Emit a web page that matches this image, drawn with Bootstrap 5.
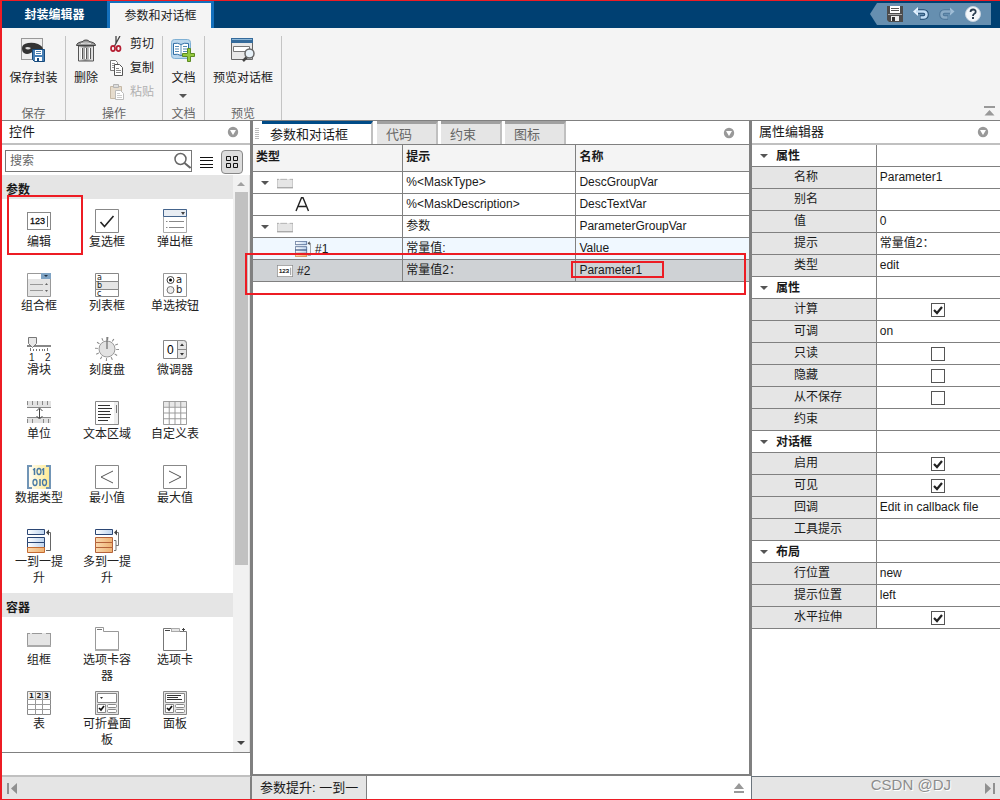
<!DOCTYPE html>
<html lang="zh-CN">
<head>
<meta charset="utf-8">
<meta name="viewport" content="width=device-width, initial-scale=1">
<title>封装编辑器</title>
<link href="https://cdn.jsdelivr.net/npm/bootstrap@5.3.0/dist/css/bootstrap.min.css" rel="stylesheet">
<script src="https://cdn.jsdelivr.net/npm/bootstrap@5.3.0/dist/js/bootstrap.bundle.min.js"></script>
<style>
:root{--line:#808080;--soft:#c0c0c0;--bar:#e5e5e5;--ribbon:#f4f4f4;--mark:#ed1c24}
body{font-family:"Liberation Sans","Noto Sans CJK SC",sans-serif;font-size:12px;line-height:16px;color:#1a1a1a;background:#fff}
button{background:none;border:0;padding:0;color:inherit;font:inherit;white-space:nowrap}
svg{display:block;flex:none}
.app{min-height:100vh;border:1px solid var(--mark);border-left-width:2px;border-right:0}
.titlebar{background:#004072;height:27px}
.app-tab{color:#fff;width:105px;font-weight:700}
.app-tab.active{width:107px;background:var(--ribbon);color:#222;border:solid #1470bd;border-width:2px 3px 0;font-weight:400}
.quick{background:#668fb0;width:121px;height:22px;margin:2px 9px 0 0;padding:0 10px 0 17px;clip-path:polygon(0 50%,7px 0,100% 0,100% 100%,7px 100%)}
.ribbon{background:var(--ribbon);height:93px;border-bottom:1px solid var(--line);padding-top:8px}
.group{border-right:1px solid #c4c4c4}
.group-name{color:#666;height:14px}
.big{height:70px;padding-top:2px}
.big>span{margin-top:8px}
.small-list{margin:-4px 0 0 3px}
.small-cmd{height:24px;gap:5px;flex:none}
.small-cmd:disabled{color:#b0b0b0}
.work{display:grid;grid-template-columns:249fr 500fr 249fr}
.work>*{min-width:0}
.pane-head{height:24px;font-size:13px;border-bottom:2px solid var(--soft);padding:0 11px 0 7px}
.left-pane,.left-foot{border-right:1px solid var(--line)}
.search-row{height:30px;padding:5px 7px 0 3px}
.search-box{height:22px;border:1px solid #777}
.search-box input{border:0;outline:0;padding:0 4px;font-size:12px;background:none;min-width:0}
.search-box input::placeholder{color:#666;opacity:1}
.view-on{width:22px;height:24px;border:1px solid #888;border-radius:4px;background:#dcdcdc}
.sect{background:var(--bar);height:24px;padding:6px 0 0 4px;font-weight:700;font-size:12px;margin:0;line-height:18px}
.sect-next{margin-top:6px}
.palette{padding:4px 0 0 3px}
.tool{width:68px;height:64px;padding-top:6px;white-space:normal;color:#222}
.tool span{width:50px;margin-top:1px}
.palette-scroll{border-bottom:1px solid var(--line)}
.vbar{width:17px;background:#f1f1f1;flex:none;border-right:1px solid #ddd}
.vbar .thumb{width:13px;height:373px;background:#c1c1c1}
.left-tail{height:23px;border-bottom:1px solid var(--soft)}
.center-pane{border:solid var(--line);border-width:0 2px 2px}
.center-tabs{height:24px;border-bottom:1px solid var(--line);padding:0 14px 0 2px}
.grip{margin:7px 3px 0 0}
.doc-tab{width:61px;height:23px;font-size:13px;color:#666;background:var(--bar);border-top:3px solid #a0a0a0;border-right:2px solid var(--soft);text-align:left;padding:2px 0 0 9px;margin-right:3px}
.doc-tab.active{width:111px;background:#fff;color:#1a1a1a;border-top-color:#004b87;padding-left:8px;margin-right:4px}
.grid-table{width:100%;border-collapse:separate;border-spacing:0;table-layout:fixed}
.grid-table td,.grid-table th{height:22px;border-bottom:1px solid var(--line);border-right:1px solid var(--line);padding:0 3px 2px;line-height:18px;white-space:nowrap;font-weight:400}
.grid-table td:last-child,.grid-table th:last-child{border-right:0}
.grid-table thead th{height:27px;background:var(--ribbon);font-weight:700}
.grid-table .nest{height:21px;gap:8px;margin-bottom:-2px}
.lv1{padding-left:5px}
.lv2{padding-left:21px}
.lv3{padding-left:39px}
.grid-table .tight{gap:4px}
.alt td{background:#f0f8ff}
.picked td{background:#cfd2d5}
.right-pane{border-left:1px solid var(--line)}
.props tbody th{background:var(--bar);padding-left:42px}
.props .cat th{background:#fff;font-weight:700;padding-left:8px}
.props input{appearance:none;display:block;width:14px;height:14px;border:1px solid #555;background:#fff;margin:2px auto 0}
.props input:checked{background:#fff url("data:image/svg+xml,%3Csvg xmlns='http://www.w3.org/2000/svg' viewBox='0 0 12 12'%3E%3Cpath d='M2 6l3 3 5-6' fill='none' stroke='%23222' stroke-width='2.2'/%3E%3C/svg%3E")}
.foot{height:23px;background:var(--bar)}
.foot-soft{border-top:1px solid var(--soft)}
.foot-mid{border-left:1px solid var(--line);padding-right:6px}
.promote{background:var(--bar);border-right:1px solid var(--line);width:115px;padding-left:8px;font-size:13px;white-space:nowrap}
.callout{position:absolute;border:2px solid var(--mark);pointer-events:none;z-index:2}
.c-tool{left:2px;top:-8px;width:76px;height:60px}
.c-row{left:-8px;right:3px;top:-7px;height:42px}
.c-name{left:-8px;top:0;width:93px;height:17px}
.brand{right:49px;top:-1px;font-size:15px;line-height:18px;color:#8c8c8c;text-shadow:1px 1px 0 #fff}
</style>
</head>
<body>
<svg width="0" height="0" class="position-absolute" aria-hidden="true">
<defs>
<linearGradient id="gy" x2="1"><stop stop-color="#fff"/><stop offset="1" stop-color="#ffe98a"/></linearGradient>
<linearGradient id="gb" x2="1"><stop stop-color="#fff"/><stop offset="1" stop-color="#bcd3ee"/></linearGradient>
<linearGradient id="go" x2="1"><stop stop-color="#fbd9ae"/><stop offset="1" stop-color="#eeb273"/></linearGradient>
<linearGradient id="gm" x2="1"><stop stop-color="#fff"/><stop offset=".45" stop-color="#999"/><stop offset="1" stop-color="#eee"/></linearGradient>
</defs>
<symbol id="menu" viewBox="0 0 12 12"><circle cx="6" cy="6" r="5.200" fill="#999"/><path d="M3 4h6L6 9z" fill="#fff"/></symbol>
<symbol id="down" viewBox="0 0 8 4"><path d="M0 0h8L4 4z" fill="#555"/></symbol>
<symbol id="groupbox" viewBox="0 0 24 24"><path d="M.5 6v13h23V6" fill="#e5e5e5" stroke="#999"/><path d="M1 6h22v12H1z" fill="#e5e5e5"/><path d="M0 6.500h3m2 0h10m4 0h5" stroke="#999"/><path d="M0 19h24" stroke="#aaa" stroke-width="2"/></symbol>
<symbol id="edit" viewBox="0 0 24 24"><rect x=".5" y="3.500" width="23" height="17" fill="#fff" stroke="#888"/><text x="3" y="15" font-size="9" font-family="Liberation Sans" stroke="#1a1a1a" stroke-width=".3">123</text><path d="M20.500 7v11" stroke="#666"/></symbol>
<symbol id="onepromo" viewBox="0 0 24 24"><g stroke="#2b4674" fill="url(#gb)"><path d="M.5.5h17v5H.5zM.5 8.500h17v5H.5zM.5 13.500h17v5H.5z"/></g><path d="M.5 18.500h17v5H.5z" fill="url(#go)" stroke="#c46a30"/><path d="M19 21.500h4.500V3.500H20" fill="none" stroke="#666"/><path d="M19 3.500l3-3v6z" fill="#444"/></symbol>
</svg>
<div class="app d-flex flex-column">
<header class="titlebar d-flex">
  <button class="app-tab">封装编辑器</button>
  <button class="app-tab active">参数和对话框</button>
  <div class="quick ms-auto d-flex align-items-center justify-content-between">
    <button aria-label="保存"><svg width="16" height="16" viewBox="0 0 16 16"><path d="M0 0h16v16H2l-2-2z" fill="#4c4c4c"/><path d="M3 0h10v7H3z" fill="#fff"/><path d="M4 2.500h8M4 4.500h8" stroke="#555"/><path d="M1 8.500h14" stroke="#aaa"/><path d="M4 10h8v5H4z" fill="#eee"/><path d="M5 11h3v4H5z" fill="#333"/></svg></button>
    <button aria-label="撤销"><svg width="16" height="14" viewBox="0 0 16 14"><path d="M4 4.500h6.500q3 .2 3 3t-3 3H7" fill="none" stroke="#234b70" stroke-width="4.500"/><path d="M0 4.500L5 0v9z" fill="#e6f3ff"/><path d="M3 4.500h7.500q3 .2 3 3t-3 3H7.500" fill="none" stroke="#c4def5" stroke-width="2.500"/></svg></button>
    <button aria-label="重做"><svg width="16" height="14" viewBox="0 0 16 14"><path d="M12 4.500H5.500q-3 .2-3 3t3 3H9" fill="none" stroke="#4f7799" stroke-width="4.500"/><path d="M15.500 4.500L11 .5v8z" fill="#9fbdd6"/><path d="M12 4.500H5.500q-3 .2-3 3t3 3h3" fill="none" stroke="#8aabc6" stroke-width="2.500"/></svg></button>
    <button aria-label="帮助"><svg width="16" height="16" viewBox="0 0 16 16"><circle cx="8" cy="8" r="7.500" fill="#f4f7fa" stroke="#c6d3df"/><path d="M5.500 6q0-2.500 2.600-2.500T10.700 6Q10.700 7.200 9 8 8 8.600 8 10" fill="none" stroke="#2c3e50" stroke-width="1.800"/><path d="M7 11h2v2H7z" fill="#2c3e50"/></svg></button>
  </div>
</header>

<section class="ribbon d-flex">
  <div class="group d-flex flex-column align-items-center" style="width:64px">
    <button class="big d-flex flex-column align-items-center"><svg width="24" height="24" viewBox="0 0 24 24"><rect x=".5" y=".5" width="21" height="21" fill="#eee" stroke="#999"/><path d="M1 10Q1 6 7 5q5-1 10 1 5 2 5 6v2q-4-3-8-2-7 6-11 3Q1 14 1 10z" fill="#333"/><path d="M4 10q2-2 6 0-3 3-6 0z" fill="#ddd"/><path d="M11.500 11.500h12v12h-10l-2-2z" fill="#477fb5" stroke="#174a7c"/><path d="M14 12h7v5h-7z" fill="#fff"/><path d="M15 13.500h5m-5 2h5" stroke="#4b7fae"/><path d="M14 19h7v4h-7z" fill="#fff"/><path d="M16 20h2v3h-2z" fill="#174a7c"/></svg><span>保存封装</span></button>
    <div class="group-name">保存</div>
  </div>
  <div class="group d-flex flex-column align-items-center" style="width:97px">
    <div class="d-flex w-100 big pt-0">
      <button class="d-flex flex-column align-items-center big" style="width:40px"><svg width="24" height="24" viewBox="0 0 24 24"><path d="M4.500 8h15v15h-15z" fill="url(#gm)" stroke="#555"/><path d="M8 10v11m4-11v11m4-11v11" stroke="#fff" stroke-width="2"/><path d="M8.500 10v11m4-11v11m4-11v11" stroke="#555"/><path d="M2.500 7.500q0-3 6.500-4 0-1.500 3-1.500t3 1.500q6.500 1 6.500 4z" fill="#999" stroke="#444"/><path d="M7 5.500q5-1 10 0" stroke="#e5e5e5" fill="none"/></svg><span>删除</span></button>
      <div class="small-list d-flex flex-column">
        <button class="small-cmd d-flex align-items-center"><svg width="16" height="16" viewBox="0 0 16 16"><path d="M7 0v8m4-8L5 11" stroke="#444" stroke-width="1.300"/><g fill="none" stroke="#b51e32" stroke-width="1.700"><ellipse cx="4" cy="12.500" rx="2" ry="2.600"/><ellipse cx="9.500" cy="12.500" rx="2" ry="2.600"/></g></svg><span>剪切</span></button>
        <button class="small-cmd d-flex align-items-center"><svg width="16" height="16" viewBox="0 0 16 16"><path d="M1.500.5h5l2 2v8h-7z" fill="#fff" stroke="#777"/><path d="M3 3.500h3m-3 2h4m-4 2h4" stroke="#999"/><path d="M5.500 4.500h5l3 3v8h-8z" fill="#fff" stroke="#555"/><path d="M7 8.500h3m-3 2h5m-5 2h5" stroke="#888"/></svg><span>复制</span></button>
        <button class="small-cmd d-flex align-items-center" disabled><svg width="16" height="16" viewBox="0 0 16 16"><path d="M1.500 2.500h11v12h-11z" fill="#e6dccd" stroke="#c6b9a6"/><path d="M4.500.5h5v3h-5z" fill="#ddd" stroke="#b5b5b5"/><path d="M6.500 6.500h5l3 3v6h-8z" fill="#fff" stroke="#bbb"/><path d="M8 9.500h3m-3 2h5m-5 2h5" stroke="#ccc"/></svg><span>粘贴</span></button>
      </div>
    </div>
    <div class="group-name">操作</div>
  </div>
  <div class="group d-flex flex-column align-items-center" style="width:42px">
    <button class="big d-flex flex-column align-items-center"><svg width="24" height="24" viewBox="0 0 24 24"><rect x=".5" y="1.500" width="19" height="19" rx="3" fill="#b9d6ed" stroke="#7fb0d4"/><path d="M2.500 5.500q4-1 7.500 1 3.500-2 7.500-1v11q-4-1-7.500 1-3.500-2-7.500-1z" fill="#fff" stroke="#2e6da4"/><path d="M10 6.500v11M4 8.500h4m-4 2.500h4m-4 2.500h4m4-5h4m-4 2.500h4m-4 2.500h4" stroke="#548ab5"/><path d="M16.500 10.500h3v5h4v3h-4v5h-3v-5h-5v-3h5z" fill="#94c83d" stroke="#5b8a22"/></svg><span>文档</span><svg width="8" height="4" class="mt-2"><use href="#down"/></svg></button>
    <div class="group-name">文档</div>
  </div>
  <div class="group d-flex flex-column align-items-center" style="width:77px">
    <button class="big d-flex flex-column align-items-center"><svg width="24" height="24" viewBox="0 0 24 24"><path d="M.5.5h21v21H.5z" fill="#e8e8e8" stroke="#666"/><path d="M0 0h22v5H0z" fill="#356b9b"/><path d="M1 1.500h20" stroke="#8eb8d8"/><path d="M2.500 8.500h16v5h-16z" fill="#fff" stroke="#777"/><path d="M16 19l-4 4" stroke="#444" stroke-width="2.500"/><circle cx="18.500" cy="15.500" r="4.500" fill="#e7f1f8" stroke="#666" stroke-width="1.500"/></svg><span>预览对话框</span></button>
    <div class="group-name">预览</div>
  </div>
  <button class="ms-auto align-self-end me-1 pb-1" aria-label="收起"><svg width="12" height="10" viewBox="0 0 12 10"><path d="M0 0h11v2H0zM5.500 4l5 5.500H.5z" fill="#999"/></svg></button>
</section>

<main class="work flex-grow-1">
<section class="left-pane d-flex flex-column">
  <div class="pane-head d-flex align-items-center justify-content-between"><span>控件</span><svg width="12" height="12"><use href="#menu"/></svg></div>
  <div class="search-row d-flex align-items-start">
    <div class="search-box d-flex align-items-center flex-grow-1"><input class="flex-grow-1" type="text" aria-label="搜索" placeholder="搜索"><svg width="17" height="18" viewBox="0 0 17 18"><circle cx="6.500" cy="7" r="5.500" fill="none" stroke="#666" stroke-width="1.500"/><path d="M10.500 11l6 5" stroke="#666" stroke-width="2"/></svg></div>
    <button class="ms-1 mt-1 px-1" aria-label="列表视图"><svg width="13" height="17" viewBox="0 0 13 17" shape-rendering="crispEdges"><path d="M0 3.500h13m-13 3h13m-13 4h13m-13 3h13" stroke="#111"/></svg></button>
    <button class="view-on ms-1 d-flex align-items-center justify-content-center" aria-label="网格视图"><svg width="12" height="12" viewBox="0 0 12 12"><path d="M.5.500h4v4h-4zM7.500.500h4v4h-4zM.5 7.500h4v4h-4zM7.500 7.500h4v4h-4z" fill="none" stroke="#111"/></svg></button>
  </div>
  <div class="palette-scroll d-flex flex-grow-1">
    <div class="flex-grow-1">
      <h2 class="sect">参数</h2>
      <div class="palette d-flex flex-wrap">
        <button class="tool d-flex flex-column align-items-center position-relative"><svg width="24" height="24"><use href="#edit"/></svg><span>编辑</span><i class="callout c-tool"></i></button>
        <button class="tool d-flex flex-column align-items-center"><svg width="24" height="24" viewBox="0 0 24 24"><path d="M.5.500h23v23H.5z" fill="#fff" stroke="#888"/><path d="M5.500 13l4 4.500L18.500 7" fill="none" stroke="#222" stroke-width="1.600"/></svg><span>复选框</span></button>
        <button class="tool d-flex flex-column align-items-center"><svg width="24" height="24" viewBox="0 0 24 24"><path d="M.5.500h23v23H.5z" fill="#fff" stroke="#aaa"/><path d="M.5.500h23v7H.5z" fill="#e8edf3" stroke="#44648c"/><path d="M18 3h4l-2 3z" fill="#444"/><path d="M3 12.500h1.500m1.500 0h15m-18 6h1.500m1.500 0h15" stroke="#888"/></svg><span>弹出框</span></button>
        <button class="tool d-flex flex-column align-items-center"><svg width="24" height="24" viewBox="0 0 24 24"><path d="M.5.500h23v23H.5z" fill="#e5e5e5" stroke="#999"/><path d="M1 1h13v5H1z" fill="#fff"/><path d="M14 0h10v6H14z" fill="#7ea3c4"/><path d="M17 2h4l-2 2z" fill="#234"/><path d="M3 11.500h13m-13 6h13" stroke="#999"/><path d="M18 12h3l-1.500-2zM18 17h3l-1.500 2z" fill="#666"/></svg><span>组合框</span></button>
        <button class="tool d-flex flex-column align-items-center"><svg width="24" height="24" viewBox="0 0 24 24"><path d="M.5.500h23v23H.5z" fill="#fff" stroke="#888"/><path d="M.5 8.500h23v8H.5z" fill="#e5e5e5" stroke="#888"/><g font-family="DejaVu Sans" font-size="8" fill="#222"><text x="2" y="7">a</text><text x="2" y="15">b</text><text x="2" y="23">c</text></g></svg><span>列表框</span></button>
        <button class="tool d-flex flex-column align-items-center"><svg width="24" height="24" viewBox="0 0 24 24"><path d="M.5.500h23v23H.5z" fill="#fff" stroke="#999"/><circle cx="7.500" cy="7" r="3.500" fill="#fff" stroke="#444"/><circle cx="7.500" cy="7" r="1.500"/><circle cx="7.500" cy="17" r="3.500" fill="#eee" stroke="#777"/><g font-family="DejaVu Sans" font-size="10" fill="#222"><text x="13" y="10">a</text><text x="13" y="20">b</text></g></svg><span>单选按钮</span></button>
        <button class="tool d-flex flex-column align-items-center"><svg width="24" height="24" viewBox="0 0 24 24" overflow="visible"><path d="M0 9h24" stroke="#888" stroke-width="2"/><path d="M1.500.5h8v6l-4 4-4-4z" fill="#e8e8e8" stroke="#777"/><path d="M3.500 11v3m17-3v3M6.500 12v2m3-2v2m3-2v2m3-2v2m2-2v2" stroke="#777"/><g font-family="Liberation Sans" font-size="10" fill="#222"><text x="2" y="24">1</text><text x="18" y="24">2</text></g></svg><span>滑块</span></button>
        <button class="tool d-flex flex-column align-items-center"><svg width="24" height="24" viewBox="0 0 24 24"><circle cx="12" cy="12" r="10.500" fill="none" stroke="#888" stroke-width="3" stroke-dasharray="1 4.500"/><circle cx="12" cy="12" r="8" fill="#e2e2e2" stroke="#999"/><path d="M12 0v12" stroke="#555"/></svg><span>刻度盘</span></button>
        <button class="tool d-flex flex-column align-items-center"><svg width="24" height="24" viewBox="0 0 24 24"><path d="M.5 3.500h20q3 0 3 3v12q0 3-3 3H.5z" fill="#fff" stroke="#888"/><path d="M14.500 3.500h6q3 0 3 3v12q0 3-3 3h-6z" fill="#e5e5e5" stroke="#888"/><path d="M14 12.500h10" stroke="#888"/><path d="M17 9h4l-2-2.500zM17 16h4l-2 2.500z" fill="#333"/><text x="4" y="17" font-size="12" font-family="Liberation Sans">0</text></svg><span>微调器</span></button>
        <button class="tool d-flex flex-column align-items-center"><svg width="24" height="24" viewBox="0 0 24 24"><path d="M0 0h24v6H0zM0 17h24v5H0z" fill="#e2e2e2"/><path d="M0 6.500h24M0 16.500h24M.5 0v4m5-4v4m5-4v4m5-4v4m5-4v4M.5 18v4m5-4v4m11-4v4m5-4v4" stroke="#888"/><path d="M12.500 8v9m-3-7l3-3 3 3m-6 5l3 3 3-3" fill="none" stroke="#444"/></svg><span>单位</span></button>
        <button class="tool d-flex flex-column align-items-center"><svg width="24" height="24" viewBox="0 0 24 24"><path d="M.5.500h23v23H.5z" fill="#fff" stroke="#888"/><path d="M19 1h4v22h-4z" fill="#eee"/><path d="M3 4.500h12m-12 3h14m-14 3h12m-12 3h13m-13 3h12m-12 3h10" stroke="#333"/><path d="M21.500 4v8" stroke="#777"/></svg><span>文本区域</span></button>
        <button class="tool d-flex flex-column align-items-center"><svg width="24" height="24" viewBox="0 0 25 25"><path d="M0 0h25v25H0z" fill="#fff"/><path d="M0 0h25v6H0z" fill="#e8e8e8"/><path d="M.5.500h24v24H.5zM6.500 0v25m6-25v25m6-25v25M0 6.500h25m-25 6h25m-25 6h25" fill="none" stroke="#999"/></svg><span>自定义表</span></button>
        <button class="tool d-flex flex-column align-items-center"><svg width="24" height="24" viewBox="0 0 24 24"><path d="M0 0h24v24H0z" fill="url(#gy)"/><path d="M5 1H1v22h4M19 1h4v22h-4" fill="none" stroke="#7195b6" stroke-width="2"/><path d="M7.500 3v7m9-7v7m-3.500 4v7M6 5l1.500-1M15 5l1.500-1" stroke="#4779a5" stroke-width="1.500"/><g fill="none" stroke="#4779a5" stroke-width="1.300"><ellipse cx="12" cy="6.500" rx="2" ry="3"/><ellipse cx="8" cy="17.500" rx="2" ry="3"/><ellipse cx="17.500" cy="17.500" rx="2" ry="3"/></g></svg><span>数据类型</span></button>
        <button class="tool d-flex flex-column align-items-center"><svg width="24" height="24" viewBox="0 0 24 24"><path d="M.5.500h23v23H.5z" fill="#fff" stroke="#888"/><path d="M18 6L6 12l12 6" fill="none" stroke="#555"/></svg><span>最小值</span></button>
        <button class="tool d-flex flex-column align-items-center"><svg width="24" height="24" viewBox="0 0 24 24"><path d="M.5.500h23v23H.5z" fill="#fff" stroke="#888"/><path d="M6 6l12 6-12 6" fill="none" stroke="#555"/></svg><span>最大值</span></button>
        <button class="tool d-flex flex-column align-items-center"><svg width="24" height="24"><use href="#onepromo"/></svg><span>一到一提升</span></button>
        <button class="tool d-flex flex-column align-items-center"><svg width="24" height="24" viewBox="0 0 24 24"><path d="M.5.5h17v5H.5z" fill="url(#gb)" stroke="#2b4674"/><path d="M.5 8.500h17v5H.5zM.5 13.500h17v5H.5zM.5 18.500h17v5H.5z" fill="url(#go)" stroke="#b5623a"/><path d="M19 11.500h2v10h-2m2-5h2.500v-13H20" fill="none" stroke="#777"/><path d="M19 3.500l3-3v6z" fill="#444"/></svg><span>多到一提升</span></button>
      </div>
      <h2 class="sect sect-next">容器</h2>
      <div class="palette d-flex flex-wrap">
        <button class="tool d-flex flex-column align-items-center"><svg width="24" height="24"><use href="#groupbox"/></svg><span>组框</span></button>
        <button class="tool d-flex flex-column align-items-center"><svg width="24" height="24" viewBox="0 0 24 24"><path d="M.5 23V.5h8v4h15V23z" fill="#fff" stroke="#999"/><path d="M2 2.500h5" stroke="#777"/><path d="M0 23h24" stroke="#aaa" stroke-width="2"/></svg><span>选项卡容器</span></button>
        <button class="tool d-flex flex-column align-items-center"><svg width="24" height="24" viewBox="0 0 24 24"><path d="M.5 1.500h8v3h15v19H.5z" fill="#fff" stroke="#777"/><path d="M8.500 1.500h8v3h-8z" fill="#e5e5e5" stroke="#aaa"/><path d="M2 3.500h5m12-1h3m-1.500-1.500v3" stroke="#444"/></svg><span>选项卡</span></button>
        <button class="tool d-flex flex-column align-items-center"><svg width="24" height="24" viewBox="0 0 24 24"><path d="M.5.500h23v23H.5z" fill="#fff" stroke="#888"/><path d="M1 1h22v7H1z" fill="#eee"/><path d="M8.500 0v24m7-24v24M0 8.500h24m-24 5h24m-24 5h24" stroke="#999"/><g font-family="DejaVu Sans" font-size="7" fill="#222" font-weight="700"><text x="2" y="7">1</text><text x="9.500" y="7">2</text><text x="17" y="7">3</text></g></svg><span>表</span></button>
        <button class="tool d-flex flex-column align-items-center"><svg width="24" height="24" viewBox="0 0 24 24"><path d="M.5.500h23v23H.5z" fill="#e5e5e5" stroke="#888"/><path d="M2.500 2.500h19v9h-19zM2.500 13.500h8v8h-8z" fill="#fff" stroke="#888"/><path d="M5 6h3l-1.500 2z" fill="#333"/><path d="M4 17l2 2 3-4" fill="none" stroke="#111" stroke-width="1.700"/><rect x="12.500" y="13.500" width="9" height="3" rx="1" fill="#fff" stroke="#888"/><rect x="12.500" y="18.500" width="9" height="3" rx="1" fill="#fff" stroke="#888"/></svg><span>可折叠面板</span></button>
        <button class="tool d-flex flex-column align-items-center"><svg width="24" height="24" viewBox="0 0 24 24"><path d="M.5.500h23v23H.5z" fill="#e5e5e5" stroke="#888"/><path d="M2.500 2.500h19v9h-19zM2.500 13.500h8v8h-8z" fill="#fff" stroke="#888"/><path d="M4 4.500h14m-14 2h11m-11 2h15" stroke="#333"/><path d="M4 17l2 2 3-4" fill="none" stroke="#111" stroke-width="1.700"/><rect x="12.500" y="13.500" width="9" height="3" rx="1" fill="#fff" stroke="#888"/><rect x="12.500" y="18.500" width="9" height="3" rx="1" fill="#fff" stroke="#888"/></svg><span>面板</span></button>
      </div>
    </div>
    <div class="vbar d-flex flex-column align-items-center">
      <svg width="8" height="17" viewBox="0 0 8 17"><path d="M0 11h8L4 7z" fill="#a0a0a0"/></svg>
      <div class="thumb"></div>
      <svg width="8" height="17" viewBox="0 0 8 17" class="mt-auto"><path d="M0 6h8l-4 4z" fill="#444"/></svg>
    </div>
  </div>
  <div class="left-tail"></div>
</section>

<section class="center-pane">
  <div class="center-tabs d-flex">
    <svg width="4" height="12" viewBox="0 0 4 12" class="grip" shape-rendering="crispEdges"><path d="M0 .5h4m-4 2h4m-4 2h4m-4 2h4m-4 2h4m-4 2h4" stroke="#bbb"/></svg>
    <button class="doc-tab active">参数和对话框</button>
    <button class="doc-tab">代码</button>
    <button class="doc-tab">约束</button>
    <button class="doc-tab">图标</button>
    <svg width="12" height="12" class="ms-auto align-self-center"><use href="#menu"/></svg>
  </div>
  <table class="grid-table">
    <colgroup><col style="width:30.3%"><col style="width:34.9%"><col></colgroup>
    <thead><tr><th>类型</th><th>提示</th><th>名称</th></tr></thead>
    <tbody>
    <tr><td><div class="nest lv1 d-flex align-items-center"><svg width="8" height="4"><use href="#down"/></svg><svg width="16" height="16"><use href="#groupbox"/></svg></div></td><td>%&lt;MaskType&gt;</td><td>DescGroupVar</td></tr>
    <tr><td><div class="nest lv3 d-flex align-items-end"><svg width="15" height="18" viewBox="0 0 15 18"><path d="M1 14L6.500.7h1.500L13.500 14M3 9.500h8.500" fill="none" stroke="#222" stroke-width="1.400"/></svg></div></td><td>%&lt;MaskDescription&gt;</td><td>DescTextVar</td></tr>
    <tr><td><div class="nest lv1 d-flex align-items-center"><svg width="8" height="4"><use href="#down"/></svg><svg width="16" height="16"><use href="#groupbox"/></svg></div></td><td>参数</td><td>ParameterGroupVar</td></tr>
    <tr class="alt"><td><div class="nest tight lv3 d-flex align-items-center"><svg width="16" height="16"><use href="#onepromo"/></svg>#1</div></td><td>常量值:</td><td>Value</td></tr>
    <tr class="picked position-relative"><td><div class="nest tight lv2 d-flex align-items-center"><svg width="16" height="16"><use href="#edit"/></svg>#2</div><i class="callout c-row"></i></td><td>常量值2：</td><td><div class="position-relative">Parameter1<i class="callout c-name"></i></div></td></tr>
    </tbody>
  </table>
</section>

<section class="right-pane d-flex flex-column">
  <div class="pane-head d-flex align-items-center justify-content-between"><span>属性编辑器</span><svg width="12" height="12"><use href="#menu"/></svg></div>
  <table class="grid-table props">
    <colgroup><col style="width:50.3%"><col></colgroup>
    <tbody>
    <tr class="cat"><th><div class="nest d-flex align-items-center"><svg width="8" height="4"><use href="#down"/></svg>属性</div></th><td></td></tr>
    <tr><th>名称</th><td>Parameter1</td></tr>
    <tr><th>别名</th><td></td></tr>
    <tr><th>值</th><td>0</td></tr>
    <tr><th>提示</th><td>常量值2：</td></tr>
    <tr><th>类型</th><td>edit</td></tr>
    <tr class="cat"><th><div class="nest d-flex align-items-center"><svg width="8" height="4"><use href="#down"/></svg>属性</div></th><td></td></tr>
    <tr><th><label for="p1">计算</label></th><td><input id="p1" type="checkbox" checked></td></tr>
    <tr><th>可调</th><td>on</td></tr>
    <tr><th><label for="p2">只读</label></th><td><input id="p2" type="checkbox"></td></tr>
    <tr><th><label for="p3">隐藏</label></th><td><input id="p3" type="checkbox"></td></tr>
    <tr><th><label for="p4">从不保存</label></th><td><input id="p4" type="checkbox"></td></tr>
    <tr><th>约束</th><td></td></tr>
    <tr class="cat"><th><div class="nest d-flex align-items-center"><svg width="8" height="4"><use href="#down"/></svg>对话框</div></th><td></td></tr>
    <tr><th><label for="p5">启用</label></th><td><input id="p5" type="checkbox" checked></td></tr>
    <tr><th><label for="p6">可见</label></th><td><input id="p6" type="checkbox" checked></td></tr>
    <tr><th>回调</th><td>Edit in callback file</td></tr>
    <tr><th>工具提示</th><td></td></tr>
    <tr class="cat"><th><div class="nest d-flex align-items-center"><svg width="8" height="4"><use href="#down"/></svg>布局</div></th><td></td></tr>
    <tr><th>行位置</th><td>new</td></tr>
    <tr><th>提示位置</th><td>left</td></tr>
    <tr><th><label for="p7">水平拉伸</label></th><td><input id="p7" type="checkbox" checked></td></tr>
    </tbody>
  </table>
</section>
</main>

<footer class="work">
  <div class="foot foot-soft left-foot d-flex align-items-center ps-1"><button aria-label="收起左侧"><svg width="12" height="11" viewBox="0 0 12 11"><path d="M1 0h2v11H1zM11 0v11L5 5.500z" fill="#909090"/></svg></button></div>
  <div class="foot foot-mid bg-white d-flex"><div class="promote d-flex align-items-center">参数提升: 一到一</div><button class="ms-auto" aria-label="展开"><svg width="12" height="12" viewBox="0 0 12 12"><path d="M6 1l5 6H1zM1 9h10v2H1z" fill="#999"/></svg></button></div>
  <div class="foot foot-soft d-flex align-items-center justify-content-end pe-1 position-relative border-start border-secondary"><span class="brand position-absolute">CSDN @DJ</span><button aria-label="收起右侧"><svg width="12" height="11" viewBox="0 0 12 11"><path d="M9 0h2v11H9zM1 0v11l6-5.500z" fill="#909090"/></svg></button></div>
</footer>
</div>
</body>
</html>
